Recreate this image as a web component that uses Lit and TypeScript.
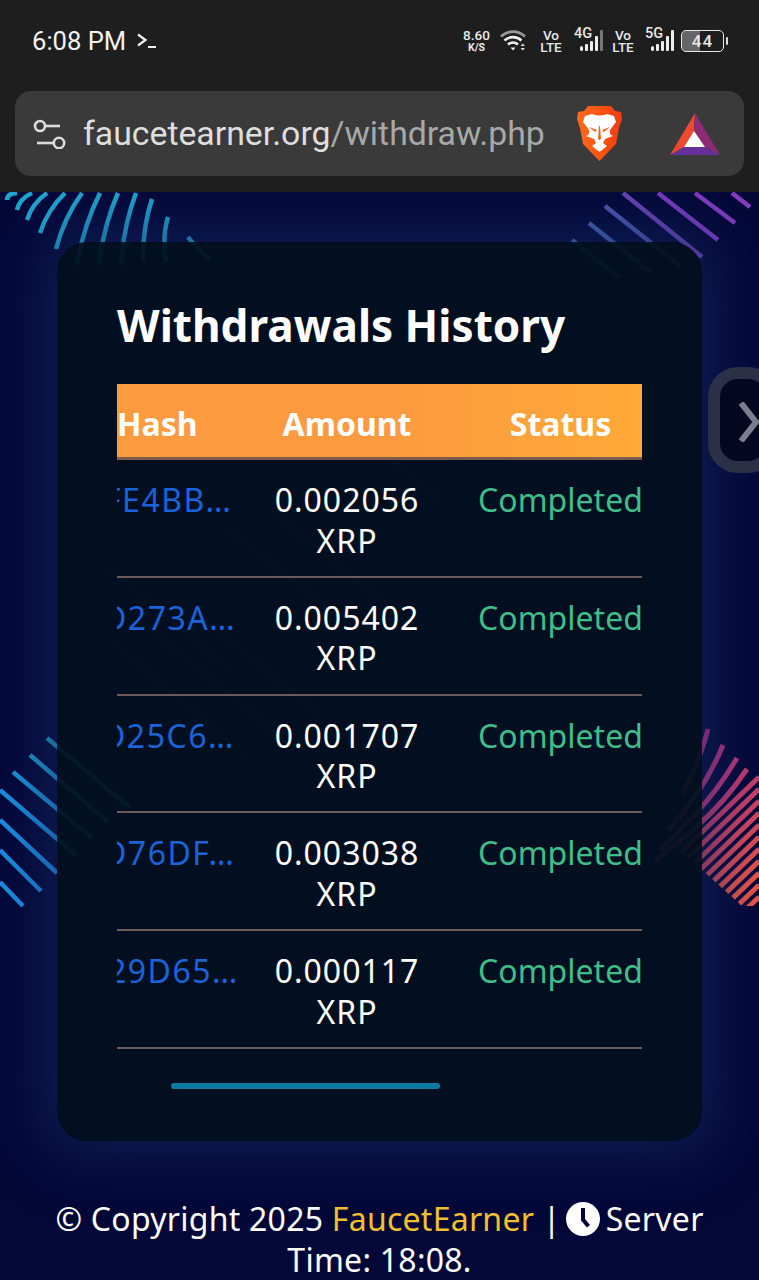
import { LitElement, html, css, svg } from "lit";
import { customElement } from "lit/decorators.js";

type Seg = [number, number, number, number, string?];

const cyan: Seg[] = [
  [7, 200, 17, 193], [17, 210, 32, 193], [27, 220, 47, 193], [40, 233, 65, 193],
  [56, 249, 82, 193], [77, 265, 100, 193], [99, 265, 118, 193], [121, 265, 136, 193],
  [143, 262, 152, 199], [166, 262, 168, 217], [188, 237, 210, 260],
];
const purple: Seg[] = [
  [623, 193, 702, 257, "#6a44b8"], [658, 193, 718, 240, "#7a3cc0"], [695, 193, 735, 223, "#7f3cc0"],
  [732, 193, 750, 207, "#8a3cc0"], [605, 206, 680, 266, "#4f58b4"], [589, 223, 650, 272, "#4562b4"],
  [572, 240, 620, 278, "#3f6ab4"],
];
const blue: Seg[] = [
  [47, 738, 130, 808, "#1e9cc4"], [30, 755, 108, 822, "#1e9cd0"], [13, 772, 92, 838, "#1a94dc"],
  [0, 790, 76, 855, "#1a90e0"], [0, 820, 57, 873, "#1a8ee2"], [0, 850, 41, 891, "#1a8ee2"],
  [0, 882, 23, 906, "#1a8ee2"],
];
const faint: Seg[] = [
  [110, 640, 250, 760, "#1f8fc0"], [140, 620, 290, 745, "#1f8fc0"], [180, 600, 320, 715, "#1f8fc0"],
  [230, 530, 340, 620, "#2f6fc0"], [270, 510, 380, 600, "#2f6fc0"], [320, 400, 440, 500, "#3f6ab4"],
  [110, 570, 230, 670, "#1f8fc0"],
];

function mix(t: number) {
  const a = [178, 46, 132], b = [236, 84, 70];
  return `rgb(${a.map((v, i) => Math.round(v + (b[i] - v) * Math.min(t, 1))).join(",")})`;
}
const fan: [string, string][] = [
  ["M708 729 Q704 745 696 765 Q690 780 682 795", mix(0)],
  ["M723 745 Q712 772 696 795 Q682 815 668 830", mix(0.12)],
  ["M737 758 Q718 790 696 813 Q676 835 660 850", mix(0.22)],
  ["M747 769 Q725 802 696 827 Q672 848 655 860", mix(0.32)],
];
const red: Seg[] = [];
for (let k = 0; k < 11; k++) {
  const y702 = 832 + 12 * k;
  const dx = (y702 - 870) / 1.87;
  red.push([759, y702 - 55, 702 + dx, y702 - dx * 0.97, mix(0.42 + k * 0.07)]);
}

const rows = [
  ["FE4BB…", -13, "0.002056"],
  ["D273A…", -14, "0.005402"],
  ["D25C6…", -15, "0.001707"],
  ["D76DF…", -14, "0.003038"],
  ["29D65…", -9, "0.000117"],
] as const;

@customElement("app-root")
export class AppRoot extends LitElement {
  static styles = css`
    :host { display: block; width: 759px; height: 1280px; overflow: hidden; position: relative; background: #030838; font-family: "Noto Sans", sans-serif; color: #fff; }
    .chrome { height: 192px; background: #1e1e1e; display: flex; flex-direction: column; position: relative; z-index: 2; }
    .status { height: 91px; display: flex; align-items: center; padding: 0 31px 9px 32px; box-sizing: border-box; font-family: Roboto, sans-serif; }
    .time { font-size: 25.6px; color: #f2f2f2; }
    .prompt { margin-left: 11px; width: 20px; height: 16px; }
    .spacer { flex: 1; }
    .icons { display: flex; align-items: center; }
    .speed { width: 27px; display: flex; flex-direction: column; align-items: center; font-weight: 500; color: #e8e8e8; font-size: 13.5px; line-height: 13px; }
    .speed small { font-size: 10.5px; line-height: 11px; font-weight: 700; }
    .wifi { margin-left: 10px; }
    .lte { display: flex; flex-direction: column; align-items: center; font-size: 13.5px; line-height: 12.5px; font-weight: 500; color: #e8e8e8; width: 22px; }
    .net { display: flex; position: relative; width: 30px; height: 26px; }
    .net span { position: absolute; left: 0; top: -3px; font-size: 14.5px; font-weight: 500; color: #e8e8e8; }
    .net svg { position: absolute; left: 3px; top: 0; }
    .battery { margin-left: 6px; display: flex; align-items: center; gap: 2px; }
    .cell { width: 41px; height: 20px; border: 1.5px solid #e8e8e8; border-radius: 5px; display: flex; align-items: center; justify-content: center; font-size: 17px; font-weight: 500; color: #e8e8e8; letter-spacing: 1px; background: linear-gradient(90deg, #666 0, #666 44%, transparent 44%); background-clip: content-box; }
    .nub { width: 2px; height: 8px; background: #ddd; border-radius: 1px; }
    .bar { height: 85px; margin: 0 15px; background: #3a3a3a; border-radius: 16px; display: flex; align-items: center; box-sizing: border-box; padding-left: 17px; }
    .url { margin-left: 17px; width: 494px; font-family: Roboto, sans-serif; font-size: 33.8px; color: #dedede; white-space: nowrap; }
    .url span { color: #a8a8a8; }
    .brave { display: block; }
    .bat { display: block; margin-left: 48px; }
    .main { position: relative; height: 1088px; display: flex; flex-direction: column; }
    .deco { position: absolute; left: 0; top: -192px; width: 759px; height: 1280px; }
    .card { position: relative; margin: 50px 57px 0; height: 899px; box-sizing: border-box; padding: 56px 60px 0; border-radius: 30px; background: rgba(2, 16, 31, 0.94); box-shadow: 0 0 55px 18px rgba(24, 44, 100, 0.55); }
    h1 { margin: 0 0 32px; font-size: 44.1px; line-height: 54px; font-weight: 700; white-space: nowrap; }
    .grid { display: grid; grid-template-columns: 128px 204px 193px; }
    .head { height: 67px; padding-top: 6px; border-bottom: 3px solid #7a5c4c; background: linear-gradient(90deg, #fd9b40, #fd9a40 50%, #ffa937); align-items: center; font-size: 32px; font-weight: 700; line-height: 40px; }
    .row { height: 117.75px; box-sizing: border-box; border-bottom: 2px solid #6e5a58; padding-top: 20px; font-size: 32px; line-height: 40.5px; }
    .hash { overflow: hidden; white-space: nowrap; color: #1b63d9; }
    .row .hash { letter-spacing: 1.5px; }
    .amt { text-align: center; }
    .row .amt { letter-spacing: 1px; padding: 0 20px; }
    .stat { padding-left: 30px; display: flex; justify-content: center; white-space: nowrap; color: #3fbe8a; }
    .head .hash { color: #fff; }
    .head .stat { color: #fff; }
    .thumb { margin: 34px 0 0 54px; width: 269px; height: 6px; border-radius: 3px; background: #0b7ba2; }
    .handle { position: absolute; left: 708px; top: 175px; width: 70px; height: 106px; box-sizing: border-box; border: 12px solid #2c3047; border-radius: 30px; background: #04071f; }
    .chev { position: absolute; left: 18px; top: 23px; }
    footer { margin: 58px 40px 0; text-align: center; font-size: 32px; line-height: 40.5px; letter-spacing: 0.25px; }
    footer b { font-weight: 400; color: #f2c12e; }
    .clock { display: inline-block; vertical-align: -5px; margin: 0 -3px 0 -3px; }
  `;

  private segs(list: Seg[], color: string, w: number) {
    return list.map(([a, b, c, d, col]) => svg`<line x1=${a} y1=${b} x2=${c} y2=${d} stroke=${col ?? color} stroke-width=${w}/>`);
  }

  private arcs(list: Seg[], color: string, w: number) {
    return list.map(([a, b, c, d]) => svg`<path d="M${a} ${b} Q${(a + c) / 2 - 5} ${(b + d) / 2 - 3} ${c} ${d}" stroke=${color} stroke-width=${w}/>`);
  }

  private bars(last: string) {
    return html`<svg width="27" height="26" viewBox="0 0 27 26">
      <rect x="3" y="18" width="3" height="5" rx="1.5" fill="#eee"/>
      <rect x="8" y="16" width="3" height="7" rx="1" fill="#eee"/>
      <rect x="13" y="13" width="3" height="10" rx="1" fill="#eee"/>
      <rect x="18" y="8" width="3" height="15" rx="1" fill="#eee"/>
      <rect x="23" y="2" width="3" height="21" rx="1" fill=${last}/>
    </svg>`;
  }

  render() {
    return html`
      <div class="chrome">
        <div class="status">
          <span class="time">6:08 PM</span>
          <svg class="prompt" viewBox="0 0 20 16" fill="none" stroke="#eee">
            <path d="M1 1.5 L8.5 7 L1 12.5" stroke-width="2.2"/><path d="M11 14 H19" stroke-width="2"/>
          </svg>
          <span class="spacer"></span>
          <div class="icons">
            <div class="speed">8.60<small>K/S</small></div>
            <svg class="wifi" width="26" height="24" viewBox="0 0 26 24" fill="none">
              <path d="M1 7.5 C8 1 18 1 25 7.5" stroke="#999" stroke-width="2.6"/>
              <path d="M4.5 11.5 C9.5 7 16.5 7 21.5 11.5" stroke="#eee" stroke-width="2.6"/>
              <path d="M8 15.5 C11 13 15 13 18 15.5" stroke="#eee" stroke-width="2.6"/>
              <path d="M10.5 18.5 H15.5 L13 21.5 Z" fill="#eee"/>
              <path d="M20.5 17 H25 L22.7 14.5 Z M20.5 19 H25 L22.7 21.5 Z" fill="#ddd"/>
            </svg>
            <div class="lte" style="margin-left:14px">Vo<span>LTE</span></div>
            <div class="net" style="margin-left:12px"><span>4G</span>${this.bars("#777")}</div>
            <div class="lte" style="margin-left:8px">Vo<span>LTE</span></div>
            <div class="net" style="margin-left:11px"><span>5G</span>${this.bars("#eee")}</div>
            <div class="battery"><div class="cell">44</div><div class="nub"></div></div>
          </div>
        </div>
        <div class="bar">
          <svg width="34" height="30" viewBox="0 0 34 30" fill="none" stroke="#dcdcdc" stroke-width="2.6">
            <circle cx="8" cy="7" r="5"/><path d="M13 7 H28"/>
            <circle cx="27" cy="24" r="5.2"/><path d="M5 24 H22"/>
          </svg>
          <div class="url">faucetearner.org<span>/withdraw.php</span></div>
          <svg class="brave" width="45" height="55" viewBox="0 0 45 55">
            <defs><linearGradient id="br" x1="0" x2="1"><stop offset="0" stop-color="#ff6a1e"/><stop offset="0.5" stop-color="#fb5512"/><stop offset="1" stop-color="#f03a10"/></linearGradient></defs>
            <path d="M11 0 H34 L38 5 L44 6 L45 13 L42 22 L39 38 L22.5 55 L6 38 L3 22 L0 13 L1 6 L7 5 Z" fill="url(#br)"/>
            <path d="M8 10 L15 8 Q22 11 30 8 L37 10 L39 16 L33 24 L33 28 L36 30 L28 33 L26 37 L30 40 L22.5 46 L15 40 L19 37 L17 33 L9 30 L12 28 L12 24 L6 16 Z" fill="#fff"/>
            <path d="M12 21 L20 24 L18 26 Z M33 21 L25 24 L27 26 Z M21 33 L22 20 H23 L24 33 L22.5 34 Z" fill="#f4631c"/>
          </svg>
          <svg class="bat" width="50" height="42" viewBox="0 0 50 42">
            <path d="M25 0 L0 42 L14 34 L24 18 Z" fill="#ef4a30"/>
            <path d="M25 0 L50 42 L35 34 L24 18 Z" fill="#8c2a72"/>
            <path d="M0 42 H50 L35 34 H14 Z" fill="#66309a"/>
            <path d="M24 18 L14 34 H35 Z" fill="#fff"/>
          </svg>
        </div>
      </div>
      <div class="main">
        <svg class="deco" viewBox="0 0 759 1280" fill="none">
          <defs><clipPath id="cut"><rect x="560" y="700" width="199" height="206"/></clipPath></defs>
          ${this.arcs(cyan, "#1fa6d0", 4.5)}
          ${this.segs(purple, "#6a44b8", 4.5)}
          ${this.segs(blue, "#1a8ee2", 4.5)}
          <g clip-path="url(#cut)">
            ${fan.map(([d, c]) => svg`<path d=${d} stroke=${c} stroke-width="5"/>`)}
            ${this.segs(red, "#d0405c", 5)}
          </g>
          <g opacity="0.4">${this.segs(faint, "#1f8fc0", 4)}</g>
        </svg>
        <div class="card">
          <h1>Withdrawals History</h1>
          <div class="grid head">
            <div class="hash">Hash</div><div class="amt">Amount</div><div class="stat">Status</div>
          </div>
          ${rows.map(([h, off, a]) => html`
            <div class="grid row">
              <div class="hash"><span style="margin-left:${off}px">${h}</span></div>
              <div class="amt">${a} XRP</div>
              <div class="stat">Completed</div>
            </div>`)}
          <div class="thumb"></div>
        </div>
        <div class="handle">
          <svg class="chev" width="22" height="40" viewBox="0 0 22 40" fill="none" stroke="#7b7e91" stroke-width="6">
            <path d="M3 1 L18 20 L3 39"/>
          </svg>
        </div>
        <footer>© Copyright 2025 <b>FaucetEarner</b> | <svg class="clock" width="34" height="34" viewBox="0 0 34 34">
            <circle cx="17" cy="17" r="17" fill="#fff"/><path d="M15 6 H19 V17 L24 23 L21 25.5 L15 18.5 Z" fill="#02063a"/>
          </svg> Server Time: 18:08.</footer>
      </div>
    `;
  }
}
